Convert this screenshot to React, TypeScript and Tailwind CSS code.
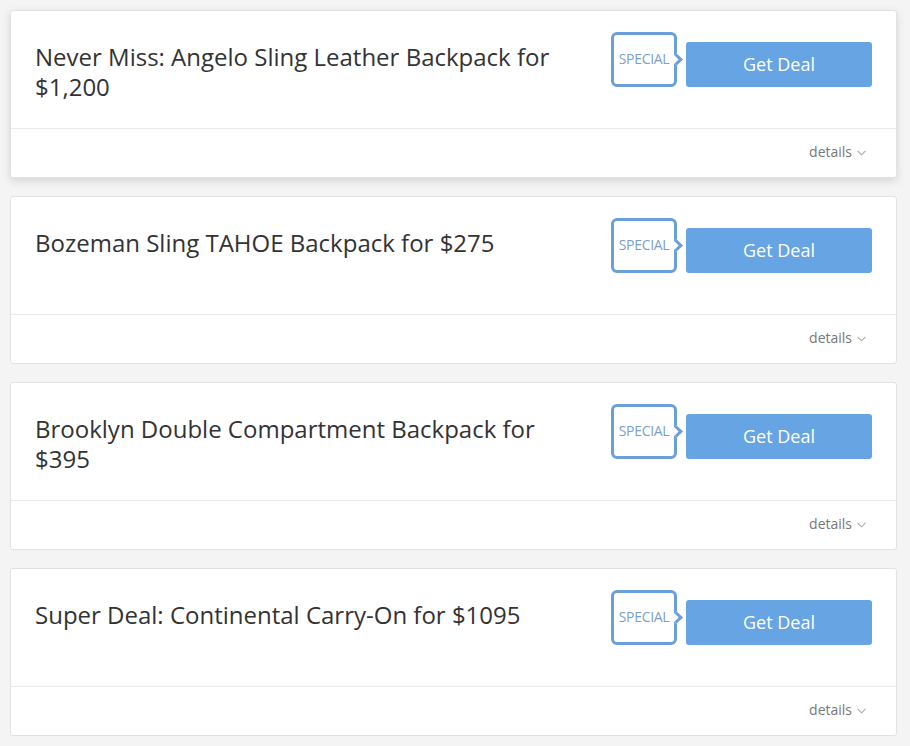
import React from 'react';

interface Deal {
  id: number;
  title: string;
  raised?: boolean;
}

const deals: Deal[] = [
  { id: 1, title: 'Never Miss: Angelo Sling Leather Backpack for $1,200', raised: true },
  { id: 2, title: 'Bozeman Sling TAHOE Backpack for $275' },
  { id: 3, title: 'Brooklyn Double Compartment Backpack for $395' },
  { id: 4, title: 'Super Deal: Continental Carry-On for $1095' },
];

const SpecialTag = () => (
  <div className="relative w-[66px] h-[55px] border-[3px] border-[#6b9fd9] rounded-[6px] bg-white flex items-center justify-center">
    <span className="text-[14px] text-[#7a9fcc] tracking-[-0.3px] mt-[-3px]">SPECIAL</span>
    {/* little pointer on the right edge */}
    <span className="absolute right-[-7px] top-[20px] w-[9px] h-[9px] bg-white border-t-[3px] border-r-[3px] border-[#6b9fd9] rotate-45" />
  </div>
);

const DealCard: React.FC<{ deal: Deal }> = ({ deal }) => (
  <div
    className={`bg-white border border-[#e2e2e2] rounded-[3px] ${
      deal.raised ? 'shadow-[0_3px_9px_rgba(0,0,0,0.13)]' : ''
    }`}
  >
    <div className="h-[117px] flex items-start pl-[24px] pr-[24px] pt-[21px]">
      <h2 className="flex-1 max-w-[545px] mt-[10px] text-[24px] leading-[30px] text-[#333]">
        {deal.title}
      </h2>
      <div className="ml-auto flex items-start gap-[9px]">
        <SpecialTag />
        <button className="mt-[10px] w-[186px] h-[45px] bg-[#67a4e4] rounded-[3px] text-white text-[18px]">
          Get Deal
        </button>
      </div>
    </div>
    <div className="h-[49px] border-t border-[#ebebeb] flex items-center justify-end pr-[30px]">
      <span className="text-[14px] text-[#777] flex items-center gap-[5px] mt-[-3px]">
        details
        <svg width="9" height="6" viewBox="0 0 9 6" className="mt-[3px]">
          <path d="M0.5 0.8 L4.5 4.8 L8.5 0.8" fill="none" stroke="#aaa" strokeWidth="1.1" />
        </svg>
      </span>
    </div>
  </div>
);

export default function App() {
  return (
    <div
      className="min-h-screen bg-[#f4f4f4] pt-[10px] pb-[10px] pl-[10px] pr-[13px] flex flex-col gap-[18px]"
      style={{ fontFamily: '"Open Sans", "Noto Sans", sans-serif' }}
    >
      {deals.map((d) => (
        <DealCard key={d.id} deal={d} />
      ))}
    </div>
  );
}
